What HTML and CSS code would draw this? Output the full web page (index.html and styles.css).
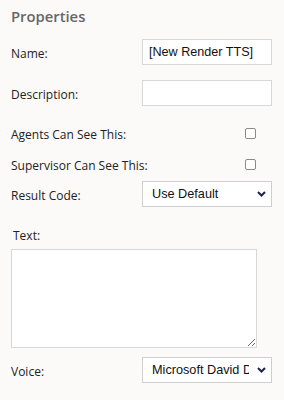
FILE: index.html
```html
<!DOCTYPE html>
<html>
<head>
<meta charset="utf-8">
<link rel="stylesheet" href="styles.css">
</head>
<body>
<div class="panel">
  <h2 class="title">Properties</h2>
  <div class="row row-name">
    <label class="lbl">Name:</label>
    <input class="field" type="text" value="[New Render TTS]">
  </div>
  <div class="row row-desc">
    <label class="lbl">Description:</label>
    <input class="field" type="text" value="">
  </div>
  <div class="row row-check row-agents">
    <label class="lbl">Agents Can See This:</label>
    <span class="check-cell"><input class="check" type="checkbox"></span>
  </div>
  <div class="row row-check row-super">
    <label class="lbl">Supervisor Can See This:</label>
    <span class="check-cell"><input class="check" type="checkbox"></span>
  </div>
  <div class="row row-result">
    <label class="lbl">Result Code:</label>
    <div class="select-wrap">
      <select class="select"><option>Use Default</option></select>
      <svg class="chev" width="9" height="6" viewBox="0 0 9 6"><path d="M1 1 L4.5 4.5 L8 1" fill="none" stroke="#1d2547" stroke-width="2"/></svg>
    </div>
  </div>
  <div class="text-label">Text:</div>
  <textarea class="area"></textarea>
  <div class="row row-voice">
    <label class="lbl">Voice:</label>
    <div class="select-wrap">
      <select class="select"><option>Microsoft David Desktop</option></select>
      <svg class="chev" width="9" height="6" viewBox="0 0 9 6"><path d="M1 1 L4.5 4.5 L8 1" fill="none" stroke="#1d2547" stroke-width="2"/></svg>
    </div>
  </div>
</div>
</body>
</html>
```
FILE: styles.css
```css
html, body {
  margin: 0;
  padding: 0;
  background: #fbfaf9;
}
body {
  width: 284px;
  height: 400px;
  overflow: hidden;
  font-family: "Open Sans", "Noto Sans", sans-serif;
  font-size: 12px;
  color: #222;
}
.panel {
  display: flex;
  flex-direction: column;
  padding: 6px 12px 0 11px;
}
.title {
  margin: 0;
  font-size: 14.8px;
  line-height: 20px;
  font-weight: 600;
  color: #666;
}
.row {
  display: flex;
  align-items: center;
  justify-content: space-between;
}
.lbl {
  padding-top: 3px;
  line-height: 16px;
  white-space: nowrap;
}
.row-name { margin-top: 13px; height: 26px; }
.row-desc { margin-top: 15px; height: 26px; }
.row-agents { margin-top: 17px; height: 20px; }
.row-super { margin-top: 11px; height: 20px; }
.row-result { margin-top: 7px; height: 26px; }
.row-voice { margin-top: 9px; height: 26px; }
.field {
  box-sizing: border-box;
  width: 130px;
  height: 26px;
  margin: 0;
  padding: 0 6px;
  border: 1px solid #d8d8d8;
  background: #fff;
  font-family: "Liberation Sans", Arial, sans-serif;
  font-size: 12.6px;
  color: #111;
  outline: none;
}
.check-cell {
  display: flex;
  width: 130px;
  justify-content: flex-end;
  padding-right: 16px;
  box-sizing: border-box;
}
.check {
  appearance: none;
  -webkit-appearance: none;
  margin: 0;
  width: 11px;
  height: 11px;
  border: 1px solid #8a8a8a;
  border-radius: 2px;
  background: #fff;
  box-sizing: border-box;
}
.select-wrap {
  position: relative;
  width: 130px;
  height: 26px;
}
.select {
  appearance: none;
  -webkit-appearance: none;
  box-sizing: border-box;
  width: 130px;
  height: 26px;
  margin: 0;
  padding: 0 22px 0 9px;
  border: 1px solid #cfcfcf;
  border-radius: 0;
  background: #fff;
  font-family: "Liberation Sans", Arial, sans-serif;
  font-size: 12.7px;
  color: #111;
  outline: none;
}
.chev {
  position: absolute;
  right: 6px;
  top: 10px;
  pointer-events: none;
}
.text-label {
  margin-top: 21px;
  padding-left: 2px;
  line-height: 16px;
}
.area {
  box-sizing: border-box;
  margin: 5px 0 0 0;
  width: 246px;
  height: 99px;
  border: 1px solid #d8d8d8;
  background: #fff;
  outline: none;
  resize: both;
}
```
